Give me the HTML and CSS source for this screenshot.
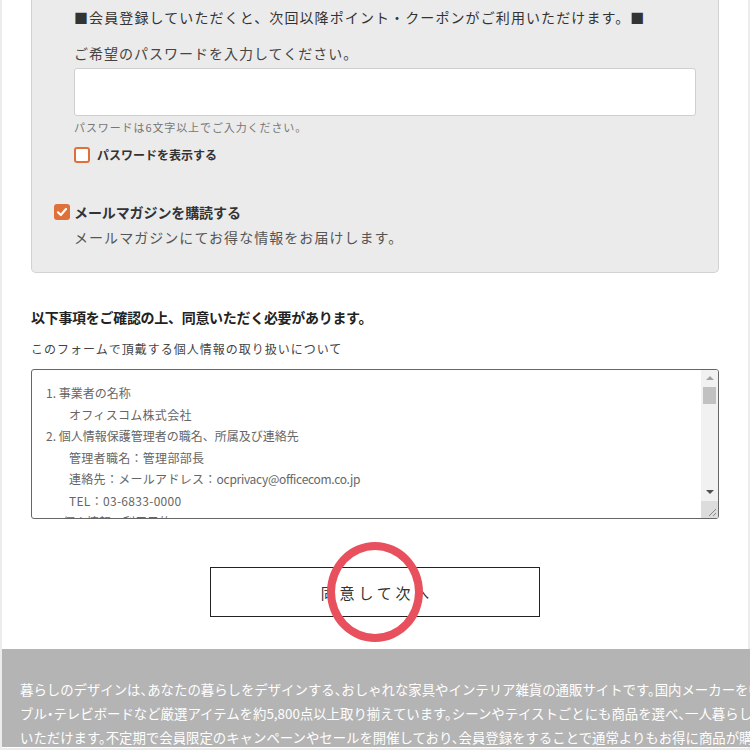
FILE: index.html
```html
<!DOCTYPE html>
<html lang="ja">
<head>
<meta charset="utf-8">
<title>会員登録</title>
<link rel="stylesheet" href="styles.css">
</head>
<body>
<div class="page">
  <div class="content">
    <div class="panel">
      <p class="notice">■会員登録していただくと、次回以降ポイント・クーポンがご利用いただけます。■</p>
      <div class="pw">
        <p class="pw-label">ご希望のパスワードを入力してください。</p>
        <div class="input"></div>
        <p class="hint">パスワードは6文字以上でご入力ください。</p>
        <div class="check-row">
          <span class="box"></span>
          <span class="check-label">パスワードを表示する</span>
        </div>
      </div>
      <div class="check-row mag">
        <span class="box checked"><svg width="16" height="16" viewBox="0 0 16 16"><path d="M4 8.3 L6.8 11 L12 5" fill="none" stroke="#fff" stroke-width="2.2" stroke-linecap="round" stroke-linejoin="round"/></svg></span>
        <span class="check-label big">メールマガジンを購読する</span>
      </div>
      <p class="mag-desc">メールマガジンにてお得な情報をお届けします。</p>
    </div>

    <h2 class="agree-title">以下事項をご確認の上、同意いただく必要があります。</h2>
    <p class="agree-sub">このフォームで頂戴する個人情報の取り扱いについて</p>
    <div class="terms">
      <div class="terms-text">
        <p>1. 事業者の名称</p>
        <p class="ind">オフィスコム株式会社</p>
        <p>2. 個人情報保護管理者の職名、所属及び連絡先</p>
        <p class="ind">管理者職名：管理部部長</p>
        <p class="ind">連絡先：メールアドレス：<span class="mail">ocprivacy@officecom.co.jp</span></p>
        <p class="ind">TEL：03-6833-0000</p>
        <p class="ind2">個人情報の利用目的</p>
      </div>
      <div class="scrollbar">
        <span class="arrow up"></span>
        <span class="thumb"></span>
        <span class="track"></span>
        <span class="arrow down"></span>
        <span class="resizer"><svg width="17" height="17" viewBox="0 0 17 17"><path d="M15 8 L8 15 M15 12 L12 15" stroke="#888" stroke-width="1"/></svg></span>
      </div>
    </div>

    <div class="btn-wrap">
      <div class="btn">同意して次へ<span class="mark"></span></div>
    </div>
  </div>
  <footer class="footer">
    <p>暮らしのデザインは、あなたの暮らしをデザインする、おしゃれな家具やインテリア雑貨の通販サイトです。国内メーカーを中心に、ソファ・ベッド・ダイニングテー</p>
    <p>ブル・テレビボードなど厳選アイテムを約5,800点以上取り揃えています。シーンやテイストごとにも商品を選べ、一人暮らしの方にもお楽しみ</p>
    <p>いただけます。不定期で会員限定のキャンペーンやセールを開催しており、会員登録をすることで通常よりもお得に商品が購入できます。</p>
  </footer>
</div>
</body>
</html>
```

FILE: styles.css
```css
* { box-sizing: border-box; }
html, body { margin: 0; padding: 0; }
body {
  background: #ececec;
  font-family: "Noto Sans CJK JP", "Noto Sans", sans-serif;
  color: #333;
  overflow: hidden;
  width: 750px;
  height: 750px;
}
p, h2 { margin: 0; }
.page {
  margin: 0 2px;
  background: #fff;
  height: 748px;
}
.content {
  padding: 0 29px;
}
.panel {
  background: #ebebeb;
  border: 1px solid #d2d2d2;
  border-top: 0;
  border-radius: 0 0 5px 5px;
  padding: 7px 22px 25px 22px;
}
.notice {
  font-size: 14px;
  line-height: 20px;
  letter-spacing: 1.1px;
  color: #333;
  padding-left: 20px;
  white-space: nowrap;
}
.pw { padding-left: 20px; }
.pw-label {
  margin-top: 16px;
  font-size: 14px;
  line-height: 20px;
  letter-spacing: 1px;
  color: #444;
}
.input {
  margin-top: 5px;
  height: 48px;
  background: #fff;
  border: 1px solid #cfcfcf;
  border-radius: 3px;
}
.hint {
  margin-top: 3px;
  font-size: 11px;
  line-height: 16px;
  letter-spacing: 0.9px;
  color: #777;
}
.check-row {
  display: flex;
  align-items: center;
  gap: 7px;
  margin-top: 12px;
  height: 16px;
}
.box {
  width: 16px;
  height: 16px;
  border: 2px solid #e0703a;
  border-radius: 3px;
  background: #fff;
  display: flex;
  align-items: center;
  justify-content: center;
  flex: none;
}
.box.checked {
  background: #e0703a;
  border: 0;
}
.check-label {
  font-size: 12px;
  font-weight: bold;
  color: #333;
  line-height: 16px;
  letter-spacing: 0;
}
.check-label.big { font-size: 14px; letter-spacing: -0.1px; }
.check-row.mag {
  margin-top: 41px;
  gap: 4px;
}
.mag-desc {
  margin-top: 7px;
  padding-left: 20px;
  font-size: 14px;
  line-height: 20px;
  letter-spacing: 1.05px;
  color: #555;
}
.agree-title {
  margin-top: 34px;
  font-size: 14px;
  line-height: 20px;
  font-weight: bold;
  color: #222;
  letter-spacing: -0.3px;
}
.agree-sub {
  margin-top: 13px;
  font-size: 12px;
  line-height: 18px;
  color: #444;
  letter-spacing: 1px;
}
.terms {
  margin-top: 11px;
  height: 150px;
  border: 1px solid #666;
  border-radius: 3px;
  display: flex;
  overflow: hidden;
  background: #fff;
}
.terms-text {
  flex: 1;
  padding: 12px 0 0 14px;
  font-size: 12px;
  line-height: 21.5px;
  color: #666;
  white-space: nowrap;
  overflow: hidden;
}
.terms-text .ind { padding-left: 23px; letter-spacing: 0.3px; }
.terms-text .ind2 { padding-left: 17px; }
.terms-text .mail { letter-spacing: -0.3px; }
.scrollbar {
  width: 17px;
  flex: none;
  background: #f1f1f1;
  display: flex;
  flex-direction: column;
  align-items: center;
}
.arrow {
  width: 0; height: 0;
  border-left: 4px solid transparent;
  border-right: 4px solid transparent;
  margin: 5px 0;
  flex: none;
}
.arrow.up { border-bottom: 4px solid #a3a3a3; margin-top: 6px; }
.arrow.down { border-top: 4px solid #505050; margin-bottom: 7px; }
.thumb {
  width: 13px;
  height: 17px;
  background: #c1c1c1;
  margin-top: 2px;
  flex: none;
}
.track { flex: 1; }
.resizer {
  width: 17px;
  height: 17px;
  background: #dcdcdc;
  flex: none;
  display: block;
}
.resizer svg { display: block; }
.btn-wrap {
  display: flex;
  justify-content: center;
  margin-top: 48px;
}
.btn {
  position: relative;
  width: 330px;
  height: 50px;
  border: 1px solid #222;
  display: flex;
  align-items: center;
  justify-content: center;
  font-size: 15px;
  letter-spacing: 3.8px;
  color: #333;
  padding-left: 4px;
}
.mark {
  position: absolute;
  left: 116px;
  top: -26px;
  width: 96px;
  height: 100px;
  border: 8px solid #e7505c;
  border-radius: 50%;
}
.footer {
  margin-top: 32px;
  width: 748px;
  height: 98px;
  background: #b4b4b4;
  padding: 28px 0 0 18px;
  color: #fff;
  font-size: 13.4px;
  line-height: 24px;
  white-space: nowrap;
  overflow: hidden;
  font-feature-settings: "halt";
}
```
